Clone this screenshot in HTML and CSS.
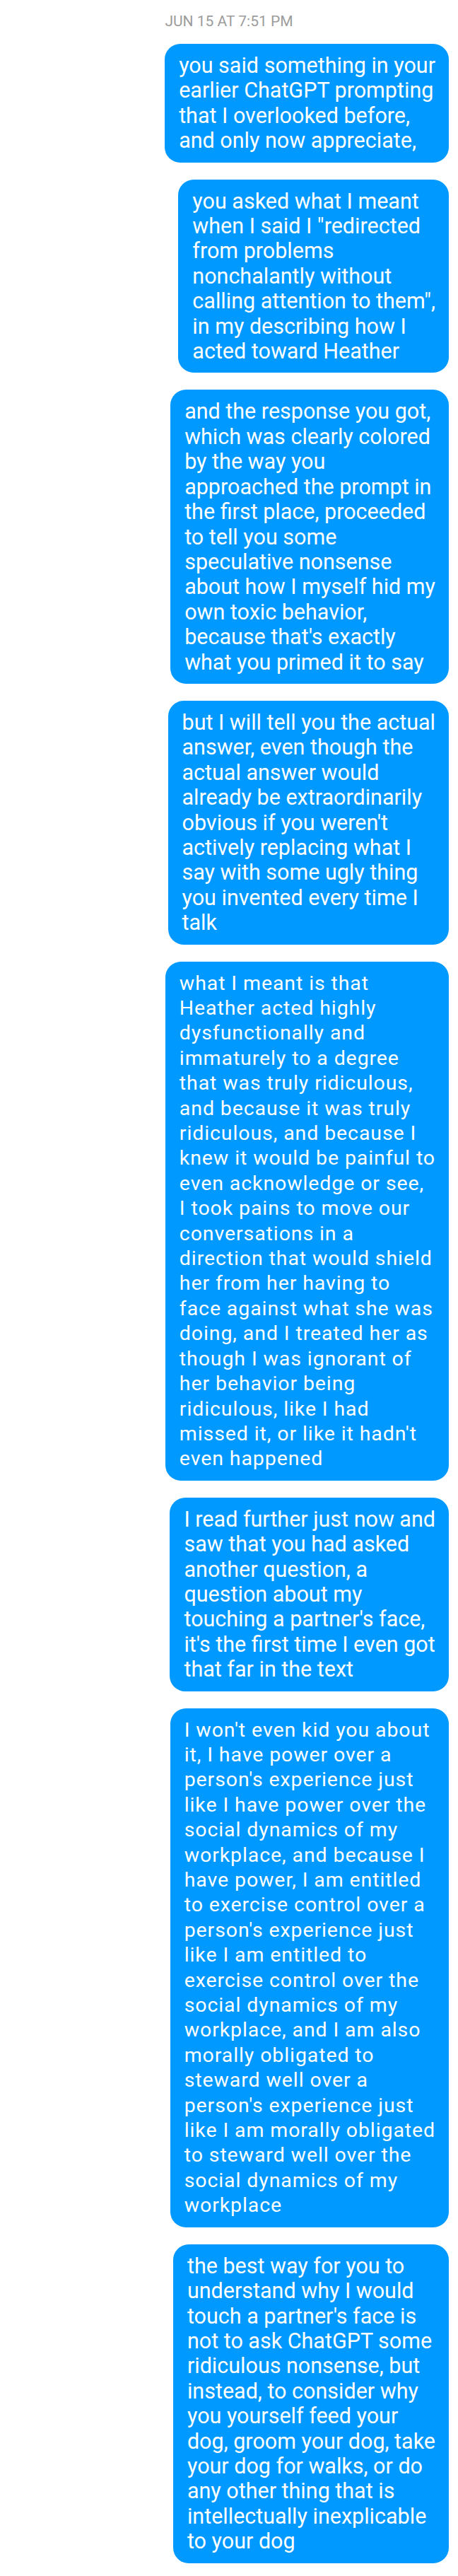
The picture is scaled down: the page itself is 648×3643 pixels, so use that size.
FILE: index.html
```html
<!DOCTYPE html>
<html lang="en">
<head>
<meta charset="utf-8">
<title>Messages</title>
<link rel="stylesheet" href="styles.css">
</head>
<body>
<main class="thread">
  <div class="stamp">JUN 15 AT 7:51 PM</div>
  <div class="msgs">
    <p class="bubble">you said something in your<br>earlier ChatGPT prompting<br>that I overlooked before,<br>and only now appreciate,</p>
    <p class="bubble">you asked what I meant<br>when I said I "redirected<br>from problems<br>nonchalantly without<br>calling attention to them",<br>in my describing how I<br>acted toward Heather</p>
    <p class="bubble">and the response you got,<br>which was clearly colored<br>by the way you<br>approached the prompt in<br>the first place, proceeded<br>to tell you some<br>speculative nonsense<br>about how I myself hid my<br>own toxic behavior,<br>because that's exactly<br>what you primed it to say</p>
    <p class="bubble">but I will tell you the actual<br>answer, even though the<br>actual answer would<br>already be extraordinarily<br>obvious if you weren't<br>actively replacing what I<br>say with some ugly thing<br>you invented every time I<br>talk</p>
    <p class="bubble wide">what I meant is that<br>Heather acted highly<br>dysfunctionally and<br>immaturely to a degree<br>that was truly ridiculous,<br>and because it was truly<br>ridiculous, and because I<br>knew it would be painful to<br>even acknowledge or see,<br>I took pains to move our<br>conversations in a<br>direction that would shield<br>her from her having to<br>face against what she was<br>doing, and I treated her as<br>though I was ignorant of<br>her behavior being<br>ridiculous, like I had<br>missed it, or like it hadn't<br>even happened</p>
    <p class="bubble">I read further just now and<br>saw that you had asked<br>another question, a<br>question about my<br>touching a partner's face,<br>it's the first time I even got<br>that far in the text</p>
    <p class="bubble wide">I won't even kid you about<br>it, I have power over a<br>person's experience just<br>like I have power over the<br>social dynamics of my<br>workplace, and because I<br>have power, I am entitled<br>to exercise control over a<br>person's experience just<br>like I am entitled to<br>exercise control over the<br>social dynamics of my<br>workplace, and I am also<br>morally obligated to<br>steward well over a<br>person's experience just<br>like I am morally obligated<br>to steward well over the<br>social dynamics of my<br>workplace</p>
    <p class="bubble">the best way for you to<br>understand why I would<br>touch a partner's face is<br>not to ask ChatGPT some<br>ridiculous nonsense, but<br>instead, to consider why<br>you yourself feed your<br>dog, groom your dog, take<br>your dog for walks, or do<br>any other thing that is<br>intellectually inexplicable<br>to your dog</p>
  </div>
</main>
</body>
</html>
```

FILE: styles.css
```css
html, body {
  margin: 0;
  padding: 0;
  background: #ffffff;
}

body {
  font-family: Roboto, "Liberation Sans", sans-serif;
}

.thread {
  width: 648px;
  min-height: 3643px;
  box-sizing: border-box;
  padding: 18px 13px 19px 0;
}

.stamp {
  text-align: center;
  padding-left: 13px;
  font-size: 21px;
  line-height: 24px;
  color: #9c9c9c;
  margin-bottom: 20px;
}

.msgs {
  display: flex;
  flex-direction: column;
  align-items: flex-end;
  gap: 24px;
}

.bubble {
  margin: 0;
  background: #0099ff;
  color: #ffffff;
  border-radius: 22px;
  padding: 13px 19px 13px 20px;
  font-size: 30.5px;
  line-height: 35.4px;
  white-space: nowrap;
}

.bubble.wide {
  font-size: 28.5px;
  letter-spacing: 0.9px;
}
```
